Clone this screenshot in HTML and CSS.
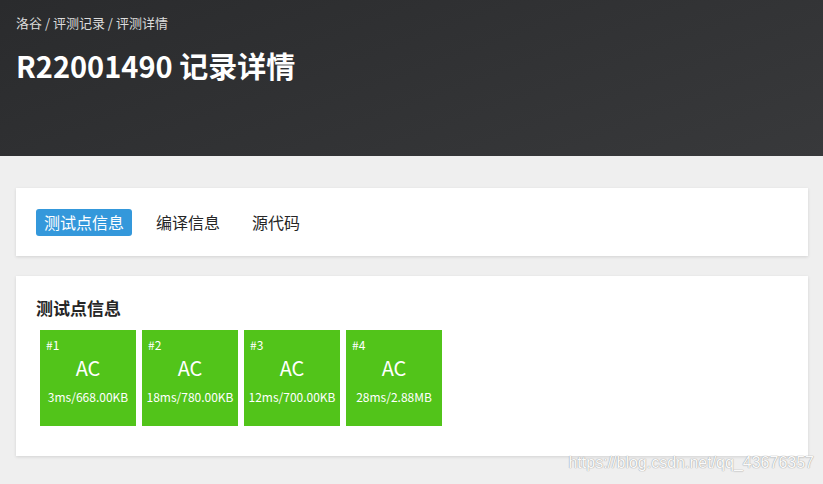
FILE: index.html
```html
<!DOCTYPE html>
<html lang="zh">
<head>
  <meta charset="UTF-8">
  <title>R22001490 记录详情</title>
  <link rel="stylesheet" href="styles.css">
</head>
<body>
  <div class="header">
    <div class="crumbs"><a href="#">洛谷</a> / <a href="#">评测记录</a> / <a href="#">评测详情</a></div>
    <h1>R22001490 记录详情</h1>
  </div>

  <div class="main">
    <div class="card tabs">
      <span class="tab active">测试点信息</span>
      <span class="tab">编译信息</span>
      <span class="tab">源代码</span>
    </div>

    <div class="card cases">
      <h3>测试点信息</h3>
      <div class="case-list">
        <div class="case">
          <span class="num">#1</span>
          <div class="status">AC</div>
          <div class="info">3ms/668.00KB</div>
        </div>
        <div class="case">
          <span class="num">#2</span>
          <div class="status">AC</div>
          <div class="info">18ms/780.00KB</div>
        </div>
        <div class="case">
          <span class="num">#3</span>
          <div class="status">AC</div>
          <div class="info">12ms/700.00KB</div>
        </div>
        <div class="case">
          <span class="num">#4</span>
          <div class="status">AC</div>
          <div class="info">28ms/2.88MB</div>
        </div>
      </div>
    </div>
  </div>

  <div class="watermark">https://blog.csdn.net/qq_43676357</div>
</body>
</html>
```

FILE: styles.css
```css
/* base */
body {
  margin: 0;
  background: #efefef;
  font-family: "Noto Sans CJK SC", "Open Sans", sans-serif;
  color: #262626;
}
/* header */
.header {
  height: 156px;
  box-sizing: border-box;
  padding: 12px 16px 0;
  background: linear-gradient(160deg, #2a2b2d 0%, #38393b 100%);
  color: #fff;
}
.crumbs {
  font-size: 13px;
  color: #ddd;
  line-height: 22px;
}
.crumbs a {
  color: #ddd;
  text-decoration: none;
}
.header h1 {
  margin: 12px 0 0;
  font-size: 29px;
  font-weight: bold;
  line-height: 38px;
}
/* cards */
.main {
  padding: 32px 15px 0 16px;
}
.card {
  background: #fff;
  box-shadow: 0 1px 3px rgba(0, 0, 0, 0.12);
  margin-bottom: 20px;
}
.tabs {
  height: 68px;
  box-sizing: border-box;
  padding: 0 20px;
  display: flex;
  align-items: center;
  gap: 16px;
}
.tab {
  font-size: 16px;
  padding: 0 8px;
  line-height: 27px;
  border-radius: 3px;
  color: #262626;
}
.tab.active {
  background: #3498db;
  color: #fff;
}
.cases {
  height: 180px;
  box-sizing: border-box;
  padding: 18px 20px 0;
}
.cases h3 {
  margin: 0 0 8px;
  font-size: 17px;
  line-height: 28px;
  font-weight: bold;
}
.case-list {
  display: flex;
  gap: 6px;
  padding-left: 4px;
}
.case {
  position: relative;
  width: 96px;
  height: 96px;
  background: #52c41a;
  color: #fff;
  text-align: center;
}
.case .num {
  position: absolute;
  left: 6px;
  top: 7px;
  font-size: 12px;
  line-height: 16px;
}
.case .status {
  padding-top: 24px;
  font-size: 20px;
  line-height: 28px;
}
.case .info {
  margin-top: 6px;
  font-size: 12px;
  line-height: 18px;
  white-space: nowrap;
}
.watermark {
  position: absolute;
  right: 9px;
  top: 454px;
  font-family: "Liberation Sans", Arial, sans-serif;
  font-size: 16px;
  color: #fafafa;
  text-shadow: 0 0 1px #999, 0 0 1px #aaa;
}
```
